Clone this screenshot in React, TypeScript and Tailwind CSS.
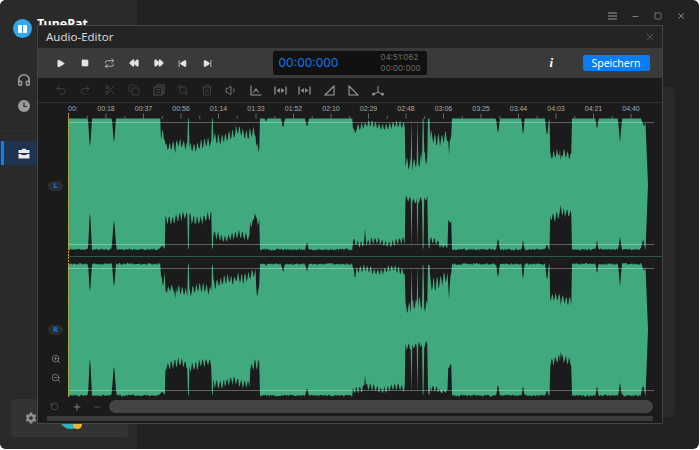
import { ReactNode } from "react";
import {
  Copy,
  Crop,
  FastForward,
  Headphones,
  Minus,
  Play,
  Plus,
  Repeat,
  Rewind,
  RotateCcw,
  Scissors,
  SkipBack,
  SkipForward,
  Square,
  Trash2,
  Undo2,
  Redo2,
  Volume1,
  X,
  ZoomIn,
  ZoomOut,
} from "lucide-react";
import { IoSettingsSharp } from "react-icons/io5";

const rulerLabels = [
  "00:18", "00:37", "00:56", "01:14", "01:33", "01:52", "02:10", "02:29",
  "02:48", "03:06", "03:25", "03:44", "04:03", "04:21", "04:40",
];

// [from, to, min depth, max depth]
const topBands = [
  [161, 165, 5, 24], [165, 188, 20, 34], [189, 212, 18, 35], [213, 236, 10, 27],
  [236, 256, 4, 22], [256, 260, 20, 41], [353, 405, 1, 13], [405, 428, 32, 54],
  [430, 452, 6, 30], [550, 572, 29, 43],
];
const bottomBands = [
  [165, 188, 24, 40], [189, 212, 24, 40], [213, 250, 7, 21], [250, 260, 22, 38],
  [353, 405, 2, 14], [405, 428, 46, 56], [428, 440, 3, 14], [440, 448, 2, 8],
  [448, 452, 25, 33], [550, 572, 28, 43],
];
// [center, half width, depth]
const topDips = [
  [90, 2, 32], [114, 2, 27], [175, 2, 40], [266, 1.5, 3], [283, 2, 10], [307, 2, 9],
  [355, 2, 17], [449, 2, 36], [498, 2, 16], [523, 1.5, 19], [547, 2, 19], [561, 2, 48],
  [597, 1.5, 12], [620, 2, 24], [644, 3, 8],
];
const bottomDips = [
  [90, 2, 43], [114, 2.5, 33], [162, 4, 5], [255, 4, 40], [307, 2, 9], [365, 1.5, 22],
  [498, 2, 13], [523, 1.5, 12], [547, 2, 7], [561, 2, 52], [597, 1.5, 12], [620, 2, 14],
  [643, 2.5, 12],
];
const slots = [188, 212.5, 411.5, 417.5, 423, 429];

function makeNoise(seed: number) {
  let s = seed;
  return () => {
    s = (s * 16807) % 2147483647;
    return s / 2147483647;
  };
}

function depthAt(x: number, bands: number[][], dips: number[][], noise: () => number, rough: number, phase: number) {
  let d = noise() * rough;
  for (const [a, b, lo, hi] of bands) {
    if (x >= a && x < b) {
      // spiky envelope: slow swell plus short teeth
      const teeth = Math.abs(Math.sin(x * 0.9 + phase));
      const swell = 0.5 + 0.5 * Math.sin(x * 0.23 + phase);
      d = lo + (0.55 * teeth * teeth + 0.3 * swell + 0.15 * noise()) * (hi - lo);
    }
  }
  for (const [c, w, depth] of dips) {
    const k = 1 - Math.abs(x - c) / w;
    if (k > 0) d = Math.max(d, depth * k);
  }
  for (const c of slots) {
    if (Math.abs(x - c) < 0.7) d = rough;
  }
  return d;
}

function channelPath(top: number, bottom: number, seed: number, roughTop: number) {
  const noise = makeNoise(seed);
  const upper: string[] = [];
  const lower: string[] = [];
  for (let x = 68; x <= 646; x += 0.75) {
    upper.push(`${x},${(top + depthAt(x, topBands, topDips, noise, roughTop, seed)).toFixed(1)}`);
    lower.unshift(`${x},${(bottom - depthAt(x, bottomBands, bottomDips, noise, 2, seed + 2)).toFixed(1)}`);
  }
  const mid = (top + bottom) / 2;
  return `M68,${top} L${upper.join(" L")} L648,${mid} L${lower.join(" L")} Z`;
}

const ch1 = channelPath(118.5, 250.5, 4211, 0);
const ch2 = channelPath(263, 396.5, 9377, 2);

function Waveform() {
  const ticks = Array.from({ length: 31 }, (_, i) => 68.5 + i * 18.75);
  return (
    <svg width={594} height={284} viewBox="68 113 594 284" className="block">
      <path d={ch1} fill="#41a97e" />
      <path d={ch2} fill="#41a97e" />
      {ticks.map((x, i) => (
        <line key={i} x1={x} x2={x} y1={i % 2 ? 116 : 113.5} y2={119} stroke="#777" strokeWidth={0.8} />
      ))}
      <path d="M68 122.5H654M68 244.5H654M68 268.5H654M68 390.5H654" stroke="#fff" strokeOpacity={0.3} strokeWidth={1} />
      <path d="M68 256.5H662" stroke="#2b5a48" strokeWidth={1} />
      <path d="M68.5 113V397" stroke="#c9a227" strokeWidth={1} strokeDasharray="2 1" />
    </svg>
  );
}

function TrimIcon({ inward }: { inward?: boolean }) {
  return (
    <svg width={13} height={11} viewBox="0 0 13 11" fill="#9a9a9a" stroke="#9a9a9a">
      <path d="M1 1.5v8M12 1.5v8" strokeWidth={1.2} />
      {inward ? (
        <path d="M2.5 5.5H5M8 5.5h2.5M5.5 3.5v4l-2-2zM7.5 3.5v4l2-2z" strokeWidth={0.6} />
      ) : (
        <path d="M3 5.5l2.5-2v4zM10 5.5l-2.5-2v4z" strokeWidth={0.6} />
      )}
    </svg>
  );
}

const cell = "w-[24.4px] flex justify-center items-center shrink-0";

function Tool({ children }: { children: ReactNode }) {
  return <div className={cell}>{children}</div>;
}

function EditToolbar() {
  const dim = { size: 12, strokeWidth: 1.4, color: "#4c4c4c" };
  const lit = "#9a9a9a";
  return (
    <div className="h-[25px] bg-[#1b1b1b] border-b border-[#333] flex items-center pl-[10.8px]">
      <Tool><Undo2 {...dim} /></Tool>
      <Tool><Redo2 {...dim} /></Tool>
      <Tool><Scissors {...dim} /></Tool>
      <Tool><Copy {...dim} /></Tool>
      <Tool>
        <svg width={12} height={12} viewBox="0 0 12 12" fill="none" stroke="#4c4c4c" strokeWidth={1.1}>
          <path d="M4 2.5V1h7v8H9M1 3h8v8H1zM3 5.5h4M3 8h4" />
        </svg>
      </Tool>
      <Tool><Crop {...dim} /></Tool>
      <Tool><Trash2 {...dim} /></Tool>
      <Tool><Volume1 size={13} strokeWidth={1.4} color={lit} /></Tool>
      <Tool>
        <svg width={12} height={11} viewBox="0 0 12 11" fill="none" stroke={lit} strokeWidth={1.1}>
          <path d="M1 .5V10H11.5M3.5 7.5L6 4l2.5 3.5" />
        </svg>
      </Tool>
      <Tool><TrimIcon /></Tool>
      <Tool><TrimIcon inward /></Tool>
      <Tool>
        <svg width={11} height={11} viewBox="0 0 11 11" fill="none" stroke={lit} strokeWidth={1.1}>
          <path d="M1 10L10 1v9z" />
        </svg>
      </Tool>
      <Tool>
        <svg width={11} height={11} viewBox="0 0 11 11" fill="none" stroke={lit} strokeWidth={1.1}>
          <path d="M1 1l9 9H1z" />
        </svg>
      </Tool>
      <Tool>
        <svg width={12} height={11} viewBox="0 0 12 11" fill={lit} stroke={lit} strokeWidth={1}>
          <path d="M6 1v6M6 7L2 9M6 7l4 2" fill="none" />
          <circle cx={1.5} cy={9.2} r={1} />
          <circle cx={10.5} cy={9.2} r={1} />
        </svg>
      </Tool>
    </div>
  );
}

function AudioEditor() {
  const icon = "#e4e4e4";
  return (
    <div className="absolute left-[38px] top-[26px] w-[624px] h-[397px] flex flex-col shadow-[0_0_0_1px_#444] bg-[#1b1b1b] font-['Noto_Sans',sans-serif]">
      <div className="h-[22px] bg-[#242424] flex items-center justify-between pl-2 pr-[6px]">
        <span className="text-[11.5px] text-[#d8d8d8]">Audio-Editor</span>
        <X size={12} strokeWidth={1} color="#888" />
      </div>

      <div className="h-[30px] bg-[#3a3a3a] flex items-center pl-[10.8px]">
        <Tool><Play size={9} fill={icon} color={icon} /></Tool>
        <Tool><Square size={8} fill={icon} color={icon} /></Tool>
        <Tool><Repeat size={11} color={icon} strokeWidth={1.5} /></Tool>
        <Tool><Rewind size={10} fill={icon} color={icon} /></Tool>
        <Tool><FastForward size={10} fill={icon} color={icon} /></Tool>
        <Tool><SkipBack size={9} fill={icon} color={icon} /></Tool>
        <Tool><SkipForward size={9} fill={icon} color={icon} /></Tool>
        <div className="ml-[53px] w-[154px] h-[24px] bg-[#111] rounded-[2px] flex items-center justify-between pl-[6px] pr-[6px]">
          <span className="text-[12px] text-[#0b78f0] font-['Inter',sans-serif]">00:00:000</span>
          <div className="flex flex-col text-[8px] leading-[11px] text-[#6a6a6a] font-['Inter',sans-serif]">
            <span>04:51:062</span>
            <span>00:00:000</span>
          </div>
        </div>
        <span className="ml-[123px] w-[6px] text-[13px] font-bold italic text-white font-['Liberation_Serif',serif]">i</span>
        <button className="ml-[27px] w-[67px] h-[16px] rounded-[2px] bg-[#0a7cf5] text-white text-[10.5px] leading-[16px]">
          Speichern
        </button>
      </div>

      <EditToolbar />

      <div className="flex">
        <div className="w-[30px] shrink-0 flex flex-col items-center pl-[5px]">
          <div className="mt-[78px] w-[15px] h-[10px] rounded-full bg-[#2c2c2c] text-[7px] leading-[10px] font-bold text-center text-[#0b78f0]">L</div>
          <div className="mt-[134px] w-[15px] h-[10px] rounded-full bg-[#2c2c2c] text-[7px] leading-[10px] font-bold text-center text-[#0b78f0]">R</div>
          <ZoomIn size={10} color="#a0a0a0" strokeWidth={1.5} className="mt-[19px]" />
          <ZoomOut size={10} color="#a0a0a0" strokeWidth={1.5} className="mt-[9px]" />
        </div>
        <div className="w-[594px]">
          <div className="h-[10px] pt-[1px] flex overflow-hidden text-[7px] leading-[10px] text-[#a8a8a8] font-['Liberation_Sans',sans-serif]">
            <span className="w-[19.25px] shrink-0">00:</span>
            {rulerLabels.map((label) => (
              <span key={label} className="w-[37.5px] shrink-0 text-center">{label}</span>
            ))}
          </div>
          <Waveform />
        </div>
      </div>

      <div className="h-[19px] flex items-center pl-[12px]">
        <RotateCcw size={9} color="#555" />
        <Plus size={10} color="#999" className="ml-[13px]" />
        <Minus size={10} color="#555" className="ml-[10px]" />
        <div className="ml-[7px] w-[544px] h-[13px] rounded-full bg-[#444]" />
      </div>
      <div className="ml-[9px] w-[606px] h-[5px] bg-[#3a3a3a]" />
    </div>
  );
}

function Sidebar() {
  return (
    <aside className="w-[138px] shrink-0 bg-[#2a2a2a] border-r border-[#1f1f1f] flex flex-col">
      <div className="mt-[17px] ml-[13px] flex items-start gap-[5px]">
        <div className="mt-[2px] w-[19px] h-[19px] rounded-full bg-[#2fa8ec] flex items-center justify-center">
          <div className="w-[9px] h-[8px] bg-white rounded-[1px] flex justify-center">
            <div className="w-[1px] h-full bg-[#2fa8ec]" />
          </div>
        </div>
        <span className="text-[12.5px] leading-[14px] font-bold text-white font-['Noto_Sans',sans-serif]">TunePat</span>
      </div>
      <div className="mt-[35px] ml-[17px]">
        <Headphones size={14} color="#9c9c9c" strokeWidth={2.6} />
      </div>
      <div className="mt-[13px] ml-[18px]">
        <svg width={12} height={12} viewBox="0 0 12 12" className="block">
          <circle cx={6} cy={6} r={6} fill="#9c9c9c" />
          <path d="M6 2.5V6.5H9" fill="none" stroke="#2a2a2a" strokeWidth={1.2} />
        </svg>
      </div>
      <div className="mt-[18px] h-[1px] bg-[#303030]" />
      <div className="mt-[10px] h-[24px] bg-[#1e3350] flex items-center">
        <div className="ml-[1px] w-[3px] h-full bg-[#0a80f5]" />
        <svg width={12} height={11} viewBox="0 0 12 11" className="ml-[14px]">
          <path d="M4 2V.8h4V2h3.5v3H.5V2zM.5 6h3v1h5V6h3v4.5H.5z" fill="#e8e8e8" />
        </svg>
      </div>
      <div className="relative mt-auto mb-[12px] ml-[11px] w-[117px] h-[38px] bg-[#333] rounded-[3px] flex items-center pl-[14px]">
        <IoSettingsSharp size={12} color="#8f8f8f" />
        <div className="absolute left-[48px] top-[16px] w-[24px] h-[14px] rounded-b-full bg-[#2bb3c0]" />
        <div className="absolute left-[62px] top-[24px] w-[9px] h-[6px] rounded-b-full bg-[#f2b632]" />
      </div>
    </aside>
  );
}

export default function App() {
  return (
    <div className="w-[700px] h-[450px] bg-white overflow-hidden">
      <div className="relative w-[699px] h-[449px] rounded-[6px] overflow-hidden flex bg-[#222]">
        <Sidebar />
        <main className="flex-1 flex flex-col">
          <div className="h-[32px] flex items-center justify-end gap-[14px] pr-[13px]">
            <svg width={9} height={8} viewBox="0 0 9 8" stroke="#999" strokeWidth={1}>
              <path d="M0 1h9M0 4h9M0 7h9" />
            </svg>
            <Minus size={9} color="#999" />
            <Square size={8} color="#999" />
            <X size={10} color="#999" />
          </div>
          <div className="mt-[55px] ml-[524px] w-[13px] h-[330px] rounded-r-[4px] bg-[#2a2a2a]" />
        </main>
        <AudioEditor />
      </div>
    </div>
  );
}
